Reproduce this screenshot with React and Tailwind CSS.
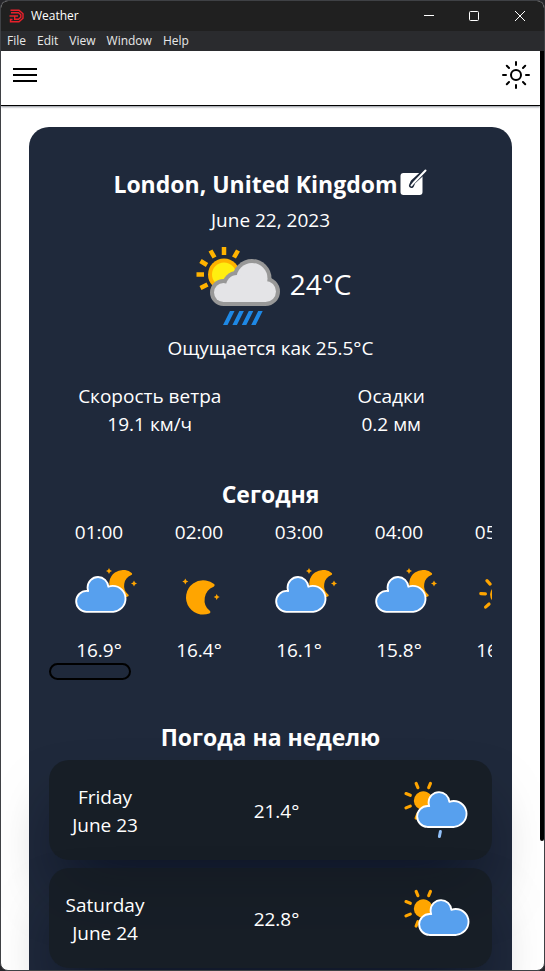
const CLOUD =
  "M47.7,35.4c0-4.6-3.7-8.2-8.2-8.2c-1,0-1.9,0.2-2.8,0.5c-0.3-3.4-3.1-6.2-6.6-6.2c-3.7,0-6.7,3-6.7,6.7c0,0.8,0.2,1.6,0.4,2.3c-0.3-0.1-0.7-0.1-1-0.1c-3.7,0-6.7,3-6.7,6.7c0,3.6,2.9,6.6,6.5,6.7l17.2,0C44.2,43.3,47.7,39.8,47.7,35.4z";
const MOON =
  "M14.5,13.2c0-3.7,2-6.9,5-8.7c-1.5-0.9-3.2-1.3-5-1.3c-5.5,0-10,4.5-10,10s4.5,10,10,10c1.8,0,3.5-0.5,5-1.3C16.5,20.2,14.5,16.9,14.5,13.2z";

function Cloud({ x, y }) {
  return (
    <path
      d={CLOUD}
      transform={`translate(${x} ${y}) scale(1.5625)`}
      fill="#57A0EE"
      stroke="#fff"
      strokeWidth="1.2"
      strokeLinejoin="round"
    />
  );
}

function Star({ x, y }) {
  return (
    <path
      d="M0,-3 L1,-1 L3,0 L1,1 L0,3 L-1,1 L-3,0 L-1,-1 Z"
      transform={`translate(${x} ${y})`}
      fill="orange"
    />
  );
}

function Moon({ x, y, scale }) {
  return (
    <path
      d={MOON}
      transform={`translate(${x} ${y}) scale(${scale}) rotate(9) translate(-14.5 -13.2)`}
      fill="orange"
      stroke="orange"
      strokeWidth="2"
      strokeLinejoin="round"
    />
  );
}

function Sun({ x, y, angle }) {
  return (
    <g transform={`translate(${x} ${y}) scale(1.5625) rotate(${angle})`}>
      <circle r="6" fill="orange" />
      {[0, 45, 90, 135, 180, 225, 270, 315].map((a) => (
        <line
          key={a}
          y1="9"
          y2="12"
          transform={`rotate(${a})`}
          stroke="orange"
          strokeWidth="2"
          strokeLinecap="round"
        />
      ))}
    </g>
  );
}

function HourIcon({ kind }) {
  return (
    <svg viewBox="0 0 100 90" className="block h-[90px] w-[100px]" aria-hidden="true">
      {kind === "cloudy-night" && (
        <>
          <Moon x={74} y={37.7} scale={1.25} />
          <Star x={60} y={25} />
          <Star x={85} y={37.5} />
          <Cloud x={2} y={-2.6} />
        </>
      )}
      {kind === "night" && (
        <>
          <Moon x={54.2} y={51.4} scale={1.5625} />
          <Star x={36.3} y={35.5} />
          <Star x={67.7} y={51} />
        </>
      )}
      {kind === "day" && <Sun x={50.5} y={48.6} angle={3} />}
    </svg>
  );
}

function DayIcon({ rain }) {
  return (
    <svg viewBox="0 0 100 100" className="block size-[100px]" aria-hidden="true">
      <Sun x={31.3} y={40.7} angle={22.5} />
      {rain ? <Cloud x={0} y={-1.5} /> : <Cloud x={2} y={-1.5} />}
      {rain && (
        <line x1="48.4" y1="71.5" x2="47.4" y2="76.5" stroke="#91C0F8" strokeWidth="3" strokeLinecap="round" />
      )}
    </svg>
  );
}

function CurrentIcon() {
  return (
    <svg viewBox="0 0 100 100" className="block size-[100px]" aria-hidden="true">
      <path
        d="M34,13v8M20.5,16.5l4,7M48,16.500l-4,7M10.500,27l6.500,4M6.500,40.500h7.500M10.500,54l7,-3.500"
        stroke="#ffb300"
        strokeWidth="4.5"
      />
      <circle cx="34" cy="40.500" r="16" fill="#ffb300" />
      <circle cx="34" cy="40.500" r="12" fill="#ffee10" />
      <g fill="#989898">
        <circle cx="62" cy="44.500" r="19.5" />
        <circle cx="47" cy="52" r="15" />
        <circle cx="33.500" cy="58.500" r="13.5" />
        <circle cx="75.500" cy="57.500" r="14.5" />
        <rect x="33" y="50" width="43" height="22" />
      </g>
      <g fill="#e4e4e7">
        <circle cx="62" cy="44.500" r="15.5" />
        <circle cx="47" cy="52" r="11" />
        <circle cx="33.500" cy="58.500" r="9.5" />
        <circle cx="75.500" cy="57.500" r="10.5" />
        <rect x="33" y="52" width="43" height="16" />
      </g>
      <path fill="#1e88e5" d="M40,77h4.500l-7,14h-4.500zM49.400,77h4.500l-7,14h-4.500zM58.800,77h4.500l-7,14h-4.500zM68.200,77h4.500l-7,14h-4.500z" />
    </svg>
  );
}

function EditIcon() {
  return (
    <svg viewBox="0 0 30 30" className="block size-[30px]" aria-hidden="true">
      <rect x="2.5" y="4" width="22" height="22" rx="3" fill="#fff" />
      <path d="M13.500,16.500 L15,13 L27,2" fill="none" stroke="#1f293b" strokeWidth="5" strokeLinecap="round" strokeLinejoin="round" />
      <path d="M13.500,16.500 L15.500,14 L27.500,1.500" fill="none" stroke="#fff" strokeWidth="2" strokeLinecap="round" strokeLinejoin="round" />
    </svg>
  );
}

function Logo() {
  return (
    <svg viewBox="0 0 16 14" className="h-[14px] w-4" fill="none" stroke="#e8202a" strokeWidth="1.4" aria-hidden="true">
      <path d="M1.500,1.200h8.500l4,3.500v4.600l-4,3.500H1.500v-2.300h2M2,3.700h7.500l2.300,2v2.600l-2.300,2H5.700V6.500M0.500,7h8.500" />
    </svg>
  );
}

const menus = ["File", "Edit", "View", "Window", "Help"];

const hours = [
  { time: "01:00", temp: "16.9°", kind: "cloudy-night" },
  { time: "02:00", temp: "16.4°", kind: "night" },
  { time: "03:00", temp: "16.1°", kind: "cloudy-night" },
  { time: "04:00", temp: "15.8°", kind: "cloudy-night" },
  { time: "05:00", temp: "16.0°", kind: "day" },
];

const days = [
  { day: "Friday", date: "June 23", temp: "21.4°", rain: true },
  { day: "Saturday", date: "June 24", temp: "22.8°", rain: false },
];

function TitleBar() {
  return (
    <div className="flex h-[30px] shrink-0 items-center bg-[#202020] pl-2 text-white">
      <Logo />
      <span className="ml-[6px] flex-1 text-[12px]">Weather</span>
      <button aria-label="Minimize" className="grid h-full w-[46px] place-items-center">
        <svg viewBox="0 0 10 10" className="size-[10px]"><path d="M0,4.500h10" stroke="#fff" /></svg>
      </button>
      <button aria-label="Maximize" className="grid h-full w-[44px] place-items-center">
        <svg viewBox="0 0 10 10" className="size-[10px]"><rect x=".5" y=".5" width="9" height="9" rx="1" fill="none" stroke="#fff" /></svg>
      </button>
      <button aria-label="Close" className="grid h-full w-12 place-items-center">
        <svg viewBox="0 0 10 10" className="size-[10px]"><path d="M0,0l10,10M10,0l-10,10" stroke="#fff" /></svg>
      </button>
    </div>
  );
}

function Header() {
  return (
    <header className="flex h-[55px] items-start justify-between border-b border-black bg-white px-2 pt-2 text-black shadow-[0_1px_2px_rgba(15,23,42,0.5)]">
      <button aria-label="Menu" className="grid size-8 place-items-center">
        <svg viewBox="0 0 24 14" className="h-[14px] w-6"><path d="M0,1h24M0,7h24M0,13h24" stroke="#000" strokeWidth="2" /></svg>
      </button>
      <button aria-label="Light theme" className="grid size-8 place-items-center">
        <svg viewBox="0 0 28 28" className="size-7" fill="none" stroke="#000" strokeWidth="2" strokeLinecap="round">
          <circle cx="14" cy="14" r="5" />
          <path d="M14,1v3M14,24v3M1,14h3M24,14h3M4.800,4.800l2.200,2.200M21,21l2.200,2.200M4.800,23.200l2.200,-2.200M21,7l2.200,-2.200" />
        </svg>
      </button>
    </header>
  );
}

export default function App() {
  return (
    <div className="h-screen bg-[#26262a] font-['Open_Sans','Noto_Sans',sans-serif]">
      <div className="flex h-full flex-col overflow-hidden rounded-lg border border-[#3f4145] bg-white">
        <TitleBar />
        <nav className="flex h-5 shrink-0 items-center gap-[11px] bg-[#2a2b2e] px-[6px] text-[12px] text-[#e8e8e8]">
          {menus.map((m) => (
            <button key={m}>{m}</button>
          ))}
        </nav>
        <div className="flex min-h-0 flex-1">
          <div className="min-w-0 flex-1 overflow-hidden">
            <Header />
            <main className="px-7 pt-[21px]">
              <section className="rounded-[20px] bg-[#1f293b] px-5 pt-[41px] pb-20 text-center text-[19px] leading-7 text-white">
                <div className="mb-[6px] flex items-center justify-center">
                  <h1 className="text-[23px] leading-8 font-bold">London, United Kingdom</h1>
                  <button aria-label="Edit location">
                    <EditIcon />
                  </button>
                </div>
                <p>June 22, 2023</p>
                <div className="flex items-center justify-center">
                  <CurrentIcon />
                  <span className="text-[28px]">24°C</span>
                </div>
                <p>Ощущается как 25.5°C</p>
                <div className="-mx-5 mt-5 grid grid-cols-2">
                  <div>
                    <p>Скорость ветра</p>
                    <p>19.1 км/ч</p>
                  </div>
                  <div>
                    <p>Осадки</p>
                    <p>0.2 мм</p>
                  </div>
                </div>
                <h2 className="mt-10 mb-2 text-[23px] leading-8 font-bold">Сегодня</h2>
                <div className="flex overflow-hidden">
                  {hours.map((h) => (
                    <div key={h.time} className="w-[100px] shrink-0">
                      <p>{h.time}</p>
                      <HourIcon kind={h.kind} />
                      <p>{h.temp}</p>
                    </div>
                  ))}
                </div>
                <div className="-mt-px h-[17px] w-[82px] rounded-full border-2 border-black" />
                <h2 className="mt-[41px] mb-[7px] text-[23px] leading-8 font-bold">Погода на неделю</h2>
                <div className="flex flex-col gap-2">
                  {days.map((d) => (
                    <div
                      key={d.day}
                      className="flex items-center rounded-[20px] bg-[#151c22]/80 shadow-[0_35px_60px_-15px_rgba(2,6,23,0.6)]"
                    >
                      <div className="w-28 pt-[2px]">
                        <p>{d.day}</p>
                        <p>{d.date}</p>
                      </div>
                      <p className="flex-1 pt-[2px]">{d.temp}</p>
                      <DayIcon rain={d.rain} />
                    </div>
                  ))}
                </div>
              </section>
            </main>
          </div>
          <div className="w-1 shrink-0">
            <div className="h-[86%] rounded-b-sm bg-black" />
          </div>
        </div>
      </div>
    </div>
  );
}
